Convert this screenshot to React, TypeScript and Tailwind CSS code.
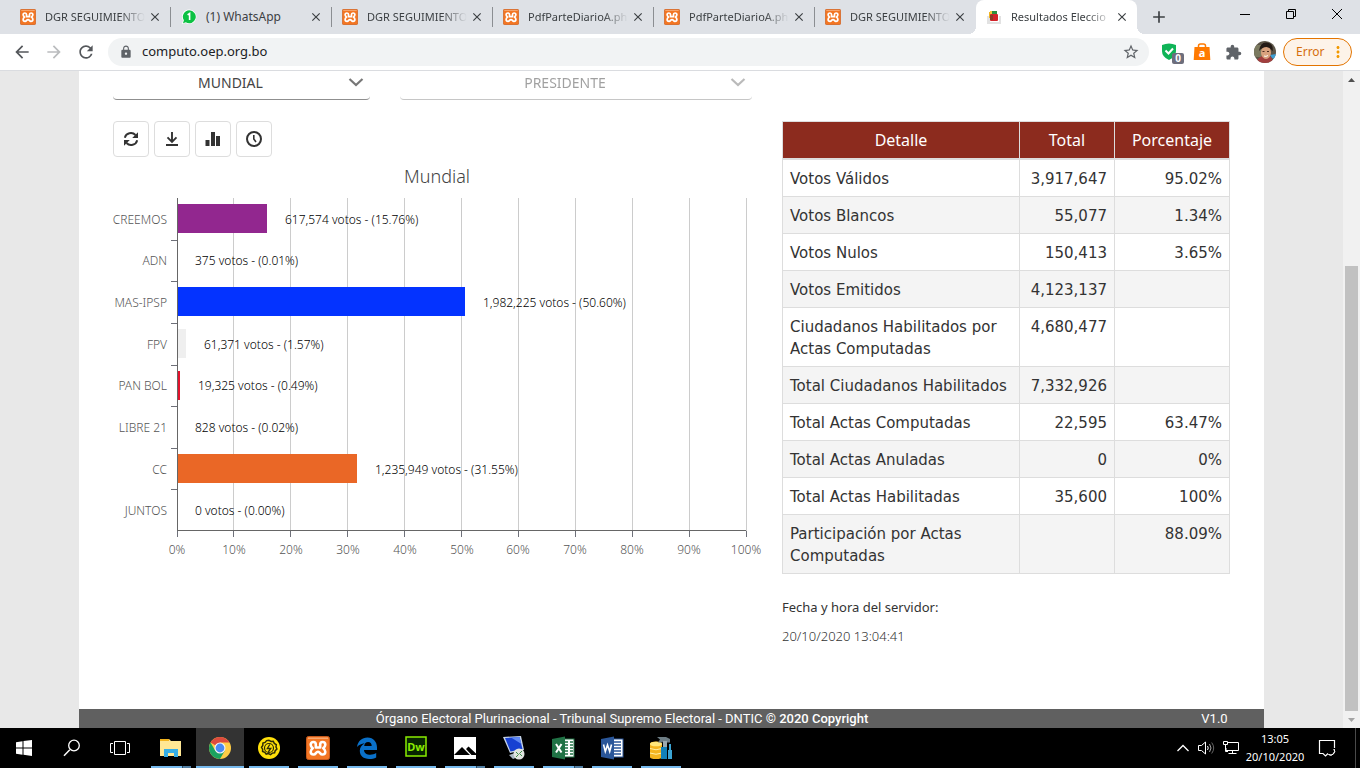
import type { ReactNode } from "react";
import {
  MdArrowBack,
  MdArrowForward,
  MdRefresh,
  MdLock,
  MdStarBorder,
  MdExtension,
  MdMoreVert,
  MdClose,
  MdAdd,
} from "react-icons/md";

const XamppIcon = ({ className }: { className: string }) => (
  <svg viewBox="0 0 24 24" className={className} aria-hidden="true">
    <rect x="0.5" y="0.5" width="23" height="23" rx="2" fill="#f37623" stroke="#c8591a" />
    <path d="M2 2.200h20" stroke="#f9b483" strokeWidth="1.200" />
    <path
      d="M9.800 11.500V8.500C9.800 6.800 8.800 6 7.500 6 5.500 6 4.700 7.300 4.700 8.700 4.700 10.200 5.400 11 6.800 12.200 5.200 13.300 4.700 14.300 4.700 15.700 4.700 17.500 6 18.500 7.600 18.500 10 18.500 9.800 15.800 12 15.800 14.200 15.800 14 18.500 16.400 18.500 18 18.500 19.300 17.500 19.300 15.700 19.300 14.300 18.800 13.300 17.200 12.200 18.600 11 19.300 10.200 19.300 8.700 19.300 7.300 18.500 6 16.500 6 15.200 6 14.200 6.800 14.200 8.500V11.500ZM9.800 11.500H14.200"
      fill="none"
      stroke="#fff"
      strokeWidth="2.600"
      strokeLinecap="round"
      strokeLinejoin="round"
    />
  </svg>
);

const WhatsAppIcon = () => (
  <svg viewBox="0 0 16 16" className="size-4 shrink-0" aria-hidden="true">
    <path d="M8.300 0.500a7.200 7.200 0 1 1-3.800 13.400L0.800 15l1.200-3.600A7.200 7.200 0 0 1 8.300 0.500z" fill="#fff" />
    <path d="M8.300 1.300a6.500 6.500 0 1 1-3.500 12L2 14.200l.9-2.900A6.500 6.500 0 0 1 8.300 1.300z" fill="#0cc143" />
    <path d="M6.600 5.900 8.600 4.500V11" fill="none" stroke="#fff" strokeWidth="1.600" />
  </svg>
);

const BallotIcon = () => (
  <svg viewBox="0 0 16 16" className="size-4 shrink-0" aria-hidden="true">
    <path d="M1 7h3v6h9V7h2v8H1z" fill="#e2e2e2" />
    <rect x="3" y="3" width="5" height="6" fill="#f0b323" />
    <rect x="5" y="2" width="6" height="4" fill="#2c8f3f" />
    <rect x="4" y="5" width="8" height="7" rx="1" fill="#d2232a" />
    <path d="M4 6h3v5H4z" fill="#8d3b25" />
    <path d="M4 2h2v3H4z" fill="#f5c93c" />
  </svg>
);

const tabs = [
  { title: "DGR SEGUIMIENTO", icon: "xampp" },
  { title: "(1) WhatsApp", icon: "whatsapp" },
  { title: "DGR SEGUIMIENTO", icon: "xampp" },
  { title: "PdfParteDiarioA.ph", icon: "xampp" },
  { title: "PdfParteDiarioA.ph", icon: "xampp" },
  { title: "DGR SEGUIMIENTO", icon: "xampp", last: true },
  { title: "Resultados Eleccio", icon: "ballot", active: true },
];

const tabIcons: Record<string, ReactNode> = {
  xampp: <XamppIcon className="size-4 shrink-0" />,
  whatsapp: <WhatsAppIcon />,
  ballot: <BallotIcon />,
};

function TabStrip() {
  return (
    <div className="flex h-[34px] shrink-0 bg-[#dee1e6] pl-[10px]">
      <div className="flex min-w-0 flex-1">
        {tabs.map((tab, i) => (
          <div
            key={i}
            className={
              tab.active
                ? "relative flex min-w-0 max-w-[161px] flex-1 items-center rounded-t-lg bg-white pl-[10px] pr-2 before:absolute before:-left-2 before:bottom-0 before:size-2 before:bg-[radial-gradient(circle_at_0_0,transparent_8px,#fff_8px)] after:absolute after:-right-2 after:bottom-0 after:size-2 after:bg-[radial-gradient(circle_at_100%_0,transparent_8px,#fff_8px)]"
                : "flex min-w-0 max-w-[161px] flex-1 items-center pl-[10px]"
            }
          >
            {tabIcons[tab.icon]}
            <span
              className={
                tab.icon === "whatsapp"
                  ? "ml-[9px] min-w-0 flex-1 whitespace-nowrap text-[12px] text-[#3c4043]"
                  : "ml-[9px] min-w-0 flex-1 overflow-hidden whitespace-nowrap text-[11px] text-[#3c4043] [mask-image:linear-gradient(to_right,#000_75%,transparent)]"
              }
            >
              {tab.title}
            </span>
            <button type="button" aria-label="Cerrar pestaña" className="ml-[3px] shrink-0 text-[#3c4043]">
              <MdClose className="size-[14px]" stroke="currentColor" />
            </button>
            {!tab.active && (
              <span className={tab.last ? "ml-2 h-5 w-px shrink-0" : "ml-2 h-5 w-px shrink-0 bg-[#8b8e92]"} />
            )}
          </div>
        ))}
        <button type="button" aria-label="Nueva pestaña" className="ml-3 text-[#3c4043]">
          <MdAdd className="size-5" />
        </button>
      </div>
      <div className="flex shrink-0 text-black">
        <button type="button" aria-label="Minimizar" className="flex h-7 w-[46px] items-center justify-center">
          <svg viewBox="0 0 12 12" className="size-3"><path d="M1 6.500h10" stroke="currentColor" /></svg>
        </button>
        <button type="button" aria-label="Restaurar" className="flex h-7 w-[46px] items-center justify-center">
          <svg viewBox="0 0 12 12" className="size-3"><path d="M1.500 3.500h7v7h-7zM3.500 3V1.500h7v7H9" fill="none" stroke="currentColor" /></svg>
        </button>
        <button type="button" aria-label="Cerrar" className="flex h-7 w-[46px] items-center justify-center">
          <svg viewBox="0 0 12 12" className="size-3"><path d="m1 1 10 10M11 1 1 11" stroke="currentColor" /></svg>
        </button>
      </div>
    </div>
  );
}

function AddressBar() {
  return (
    <div className="flex h-[37px] shrink-0 items-center border-b border-[#dadce0] bg-white pl-3 pr-2">
      <div className="flex gap-3 text-[#54575b]">
        <button type="button" aria-label="Atrás"><MdArrowBack className="size-5" /></button>
        <button type="button" aria-label="Adelante" className="text-[#babcbe]"><MdArrowForward className="size-5" /></button>
        <button type="button" aria-label="Recargar"><MdRefresh className="size-5" /></button>
      </div>
      <div className="ml-3 flex h-7 flex-1 items-center rounded-full bg-[#f1f3f4] pl-[11px] pr-[9px]">
        <MdLock className="size-[14px] text-[#5f6368]" />
        <input
          aria-label="Dirección"
          defaultValue="computo.oep.org.bo"
          className="ml-[9px] min-w-0 flex-1 bg-transparent text-[13px] text-[#202124] outline-none"
        />
        <button type="button" aria-label="Marcador"><MdStarBorder className="size-[18px] text-[#5f6368]" /></button>
      </div>
      <div className="ml-3 flex items-center">
        <button type="button" aria-label="Protección" className="w-[25px]">
          <svg viewBox="0 0 25 24" className="h-6 w-[25px]">
            <path d="M1 5q7-3 14 0v6q0 6-7 9-7-3-7-9z" fill="#0fb457" />
            <path d="m4.500 10.500 3 3 4.500-5" fill="none" stroke="#fff" strokeWidth="2" />
            <rect x="11" y="13" width="12" height="11" rx="2" fill="#6d6e7c" />
            <text x="17" y="22" textAnchor="middle" fontSize="10" fontWeight="700" fill="#fff">0</text>
          </svg>
        </button>
        <button type="button" aria-label="Compras" className="ml-[7px] w-[18px]">
          <svg viewBox="0 0 18 18" className="size-[18px]">
            <path d="M1.500 4h15l.8 13H.7z" fill="#ff7a00" />
            <path d="M5.500 5.500V3a2 2 0 0 1 2-2h3a2 2 0 0 1 2 2v2.500" fill="none" stroke="#ff7a00" strokeWidth="1.500" />
            <text x="9" y="14" textAnchor="middle" fontSize="11" fontWeight="700" fill="#fff">a</text>
          </svg>
        </button>
        <button type="button" aria-label="Extensiones" className="ml-[14px]"><MdExtension className="size-[17px] text-[#5f6368]" /></button>
        <button type="button" aria-label="Perfil" className="ml-3">
          <svg viewBox="0 0 22 22" className="size-[22px] rounded-full">
            <rect width="22" height="22" fill="#5c5548" />
            <path d="M0 4h8v12H0z" fill="#7b7a60" />
            <path d="M3 19q6-7 14-3l3 6H3z" fill="#a23e3e" />
            <path d="M16 14l6-1v6l-4-2z" fill="#3d9fd6" />
            <ellipse cx="12" cy="11.500" rx="5" ry="6.500" fill="#d9a27e" />
            <path d="M5 10Q6 1 13 1.500q7 1 5.500 9-2-4-6-4.500-4 0-7.500 4z" fill="#241a16" />
            <path d="M8.500 10.500h2M13 10.500h2" stroke="#4b2b20" />
            <path d="M10 15q2 1 4-.5" fill="none" stroke="#fff" />
          </svg>
        </button>
        <button type="button" className="ml-[7px] flex h-7 w-[69px] items-center justify-between rounded-full border border-[#e37400] bg-[#fdf3e9] pl-3 pr-1 text-[12px] text-[#d56e0c]">
          Error
          <MdMoreVert className="size-[18px] text-[#f29900]" />
        </button>
      </div>
    </div>
  );
}

const results = [
  { party: "CREEMOS", votes: "617,574", pct: 15.76, color: "#92278f" },
  { party: "ADN", votes: "375", pct: 0.01, color: "#777777" },
  { party: "MAS-IPSP", votes: "1,982,225", pct: 50.6, color: "#0433ff" },
  { party: "FPV", votes: "61,371", pct: 1.57, color: "#efefef" },
  { party: "PAN BOL", votes: "19,325", pct: 0.49, color: "#e3122c" },
  { party: "LIBRE 21", votes: "828", pct: 0.02, color: "#777777" },
  { party: "CC", votes: "1,235,949", pct: 31.55, color: "#ea6726" },
  { party: "JUNTOS", votes: "0", pct: 0, color: "#777777" },
];

const PLOT_X = 64;
const PLOT_Y = 41;
const PLOT_W = 569;
const PLOT_H = 333;
const ROW_H = PLOT_H / results.length;

function ResultsChart() {
  const steps = Array.from({ length: 11 }, (_, i) => i);
  return (
    <svg viewBox="0 0 639 410" className="block w-full overflow-visible text-[12px] font-light" role="img" aria-label="Resultados Mundial">
      <text x="324" y="26" textAnchor="middle" fontSize="18" fill="#444">Mundial</text>
      <g shapeRendering="crispEdges">
        {steps.map((i) => {
          const x = PLOT_X + 0.5 + Math.floor((PLOT_W / 10) * i);
          return (
            <g key={i}>
              <line x1={x} x2={x} y1={PLOT_Y} y2={PLOT_Y + PLOT_H} stroke="#ccc" />
              <line x1={x} x2={x} y1={PLOT_Y + PLOT_H} y2={PLOT_Y + PLOT_H + 6} stroke="#6e7079" />
            </g>
          );
        })}
        {results.map((r, i) => (
          <g key={r.party}>
            <rect x={PLOT_X} y={Math.round(PLOT_Y + ROW_H * i + 6)} width={(PLOT_W * r.pct) / 100} height="29" fill={r.color} />
            {i > 0 && (
              <line x1={PLOT_X - 6} x2={PLOT_X} y1={Math.round(PLOT_Y + ROW_H * i) + 0.5} y2={Math.round(PLOT_Y + ROW_H * i) + 0.5} stroke="#6e7079" />
            )}
          </g>
        ))}
        <path d={`M${PLOT_X + 0.5} ${PLOT_Y}V${PLOT_Y + PLOT_H - 0.5}H${PLOT_X + PLOT_W}`} fill="none" stroke="#666" />
      </g>
      {results.map((r, i) => (
        <g key={r.party}>
          <text x={PLOT_X - 10} y={Math.round(PLOT_Y + ROW_H * (i + 0.5)) + 5} textAnchor="end" fill="#555">{r.party}</text>
          <text x={Math.round(PLOT_X + (PLOT_W * r.pct) / 100) + 18} y={Math.round(PLOT_Y + ROW_H * (i + 0.5)) + 5} fill="#000">
            {`${r.votes} votos - (${r.pct.toFixed(2)}%)`}
          </text>
        </g>
      ))}
      {steps.map((i) => (
        <text key={i} x={PLOT_X + Math.round((PLOT_W / 10) * i)} y="397" textAnchor="middle" fill="#555">{i * 10}%</text>
      ))}
    </svg>
  );
}

const details = [
  ["Votos Válidos", "3,917,647", "95.02%"],
  ["Votos Blancos", "55,077", "1.34%"],
  ["Votos Nulos", "150,413", "3.65%"],
  ["Votos Emitidos", "4,123,137", ""],
  ["Ciudadanos Habilitados por Actas Computadas", "4,680,477", ""],
  ["Total Ciudadanos Habilitados", "7,332,926", ""],
  ["Total Actas Computadas", "22,595", "63.47%"],
  ["Total Actas Anuladas", "0", "0%"],
  ["Total Actas Habilitadas", "35,600", "100%"],
  ["Participación por Actas Computadas", "", "88.09%"],
];

function DetailTable() {
  return (
    <table className="w-full table-fixed border-collapse font-['DejaVu_Sans',sans-serif] text-[15px] leading-[22px] text-[#333]">
      <colgroup>
        <col />
        <col className="w-[95px]" />
        <col className="w-[115px]" />
      </colgroup>
      <thead>
        <tr className="bg-[#8c2b1e] text-white">
          {["Detalle", "Total", "Porcentaje"].map((h) => (
            <th key={h} className="border border-b-2 border-[#ddd] px-[7px] py-[7px] font-['Noto_Sans',sans-serif] text-[16px] font-normal">{h}</th>
          ))}
        </tr>
      </thead>
      <tbody>
        {details.map(([name, total, pct]) => (
          <tr key={name} className="align-top even:bg-[#f4f4f4]">
            <td className="border border-[#ddd] px-[7px] pb-[6px] pt-2">{name}</td>
            <td className="border border-[#ddd] px-[7px] pb-[6px] pt-2 text-right">{total}</td>
            <td className="border border-[#ddd] px-[7px] pb-[6px] pt-2 text-right">{pct}</td>
          </tr>
        ))}
      </tbody>
    </table>
  );
}

function Picker({ label, value, disabled }: { label: string; value: string; disabled?: boolean }) {
  return (
    <div className={disabled ? "relative min-w-0 flex-1 opacity-50" : "relative w-[257px] shrink-0"}>
      <select
        aria-label={label}
        disabled={disabled}
        className="block h-[29px] w-full appearance-none rounded-sm border-b border-[#8f8f8f] bg-transparent pb-[5px] pr-[22px] text-center text-[14px] text-[#444] [text-align-last:center]"
      >
        <option>{value}</option>
      </select>
      <svg viewBox="0 0 16 10" className="pointer-events-none absolute right-[6px] top-[6px] h-[10px] w-4">
        <path d="m1.500 2 6.500 6L14.500 2" fill="none" stroke="#777" strokeWidth="2.200" />
      </svg>
    </div>
  );
}

const toolButtons: { label: string; drawing: ReactNode }[] = [
  {
    label: "Actualizar",
    drawing: (
      <>
        <path d="M2.800 7.800A6.300 6.300 0 0 1 13.500 5M15.200 10.200A6.300 6.300 0 0 1 4.500 13" fill="none" stroke="#333" strokeWidth="1.900" />
        <path d="M16 2.200V8h-5.800zM2 15.800V10h5.800z" fill="#333" />
      </>
    ),
  },
  {
    label: "Descargar",
    drawing: (
      <path d="M9 2v9.500M4.500 7.300 9 11.800l4.500-4.500M3 15h12" fill="none" stroke="#333" strokeWidth="1.900" />
    ),
  },
  { label: "Gráfico", drawing: <path d="M1.500 10h4v6h-4zM7 2h4v14H7zM12 6h4v10h-4z" fill="#333" /> },
  {
    label: "Historial",
    drawing: (
      <>
        <circle cx="9" cy="9" r="7" fill="none" stroke="#333" strokeWidth="2" />
        <path d="M8.800 5v4l2.200 3" fill="none" stroke="#333" strokeWidth="1.600" />
      </>
    ),
  },
];

function WebPage() {
  return (
    <div className="flex min-h-0 flex-1 bg-[#e8e8e8]">
      <div className="mx-auto flex w-full min-w-0 max-w-[1185px] flex-col overflow-hidden bg-white">
        <main className="flex min-h-0 flex-1 gap-[30px] px-[34px]">
          <section className="min-w-0 flex-1">
            <div className="flex gap-[30px]">
              <Picker label="Ámbito" value="MUNDIAL" />
              <Picker label="Cargo" value="PRESIDENTE" disabled />
            </div>
            <div className="mt-[21px] flex gap-[5px]">
              {toolButtons.map((b) => (
                <button key={b.label} type="button" aria-label={b.label} className="flex size-9 items-center justify-center rounded border border-[#ddd]">
                  <svg viewBox="0 0 18 18" className="size-[18px]">{b.drawing}</svg>
                </button>
              ))}
            </div>
            <ResultsChart />
          </section>
          <aside className="w-[448px] shrink-0 pt-[50px]">
            <DetailTable />
            <p className="mt-[23px] text-[13px] leading-5 text-[#333]">Fecha y hora del servidor:</p>
            <p className="mt-[9px] text-[13px] font-light leading-5 text-[#333]">20/10/2020 13:04:41</p>
          </aside>
        </main>
        <footer className="flex h-[19px] shrink-0 items-center bg-[#606060] text-center font-[Roboto,sans-serif] text-[13px] text-white">
          <p className="flex-1">
            Órgano Electoral Plurinacional - Tribunal Supremo Electoral - DNTIC <span className="font-medium">© 2020 Copyright</span>
          </p>
          <p className="w-[99px]">V1.0</p>
        </footer>
      </div>
      <div className="flex w-[17px] shrink-0 flex-col items-center bg-[#f1f1f1]">
        <svg viewBox="0 0 17 17" className="size-[17px] shrink-0"><path d="M5 11h7L8.500 7z" fill="#505050" /></svg>
        <div className="w-[13px] flex-1 pt-[178px]">
          <div className="h-full bg-[#c1c1c1]" />
        </div>
        <svg viewBox="0 0 17 17" className="size-[17px] shrink-0"><path d="M5 7h7l-3.500 4z" fill="#a3a3a3" /></svg>
      </div>
    </div>
  );
}

const apps: { name: string; multi?: boolean; active?: boolean; drawing: ReactNode }[] = [
  {
    name: "Explorador",
    multi: true,
    drawing: (
      <>
        <path d="M1 3h9l2 2h10v15H1z" fill="#ffe794" />
        <path d="M1 3h9v2H1z" fill="#f2b41f" />
        <path d="M5 21v-8h14v8h-4v-4H9v4z" fill="#36aee6" />
      </>
    ),
  },
  {
    name: "Chrome",
    active: true,
    drawing: (
      <>
        <circle cx="12" cy="12" r="11" fill="#ffcd46" />
        <path d="M12 12 2.500 6.500A11 11 0 0 1 21.500 6.500H12z" fill="#dd4b3e" />
        <path d="M2.500 6.500A11 11 0 0 0 12 23l4.800-8.300L12 12 7.300 14.700z" fill="#1aa260" />
        <circle cx="12" cy="12" r="5.500" fill="#f5f5f5" />
        <circle cx="12" cy="12" r="4.400" fill="#4a8af4" />
      </>
    ),
  },
  {
    name: "Monitor",
    drawing: (
      <>
        <circle cx="12" cy="12" r="11" fill="#ffe00a" />
        <path
          d="M12 4.300l2 1.200 2.300-.2 1 2.100 2 1.200-.3 2.300.9 2.100-1.700 1.600-.6 2.200-2.300.3-1.800 1.500-2-1-2.300.5-1.400-1.800-2.200-.8v-2.300L4.500 11.300l1.300-1.900.1-2.300 2.200-.7 1.500-1.800z"
          fill="none"
          stroke="#2e2c07"
          strokeWidth="1.500"
        />
        <circle cx="12" cy="12" r="4.500" fill="none" stroke="#2e2c07" strokeWidth="1.200" />
        <path d="m12.800 8.500-2.500 4h3.500l-2.500 3.500" fill="none" stroke="#2e2c07" strokeWidth="1.300" />
      </>
    ),
  },
  { name: "XAMPP", drawing: <XamppIcon className="size-6" /> },
  {
    name: "Edge",
    drawing: (
      <path
        d="M2 11C3 5 7 1.500 12.500 1.500 18.500 1.500 22 6 22 11.500V14H9c.2 3.500 3.200 4.800 6.200 4.800 2.300 0 4.200-.7 6-1.700v4.300c-2 1.100-4.300 1.600-7 1.600-5.700 0-9.400-3.200-9.400-8.200 0-3.300 1.800-6 4.900-7.600C6.500 7.600 4 8.700 2 11zm7.200-1h7.500c0-2.600-1.400-4-3.600-4S9.500 7.600 9.200 10z"
        fill="#0a70c8"
      />
    ),
  },
  {
    name: "Dreamweaver",
    drawing: (
      <>
        <rect x="2" y="1" width="20" height="19" fill="#072401" stroke="#8aec00" strokeWidth="1.500" />
        <text x="12" y="14.500" textAnchor="middle" fontSize="11" fontWeight="700" fill="#8aec00">Dw</text>
      </>
    ),
  },
  {
    name: "Fotos",
    multi: true,
    drawing: (
      <>
        <rect x="1" y="1" width="22" height="22" fill="#fff" />
        <path d="M1 19 9 11l8 8zM13 13l2.500-2.500L23 17.500V19h-4.500z" fill="#000" />
      </>
    ),
  },
  {
    name: "Escritorio remoto",
    drawing: (
      <>
        <path d="m1 1 18-1 3 14-14 3z" fill="#c7d5ea" />
        <path d="m3 2 14.500-1 3 12-12 2.500z" fill="#1741d2" />
        <path d="m9 1.600 8.500-.6 2 7z" fill="#5f88f2" />
        <path d="m7 19 9-3 2 4-7 3z" fill="#aab7c6" />
        <circle cx="17" cy="18" r="5.500" fill="#e1e4e1" />
        <path d="m14 16 2.500 2.500L14 21M20 15l-2.500 2.500L20 20" fill="none" stroke="#40904a" />
      </>
    ),
  },
  {
    name: "Excel",
    multi: true,
    drawing: (
      <>
        <rect x="12" y="3" width="11" height="18" fill="#fff" stroke="#207245" />
        <path d="M14 6h3M19 6h3M14 9h3M19 9h3M14 12h3M19 12h3M14 15h3M19 15h3M14 18h3M19 18h3" stroke="#207245" strokeWidth="1.600" />
        <path d="m1 3 13-2.500v23L1 21z" fill="#207245" />
        <path d="m5 8 5.500 8.500M10.500 8 5 16.500" stroke="#fff" strokeWidth="2" />
      </>
    ),
  },
  {
    name: "Word",
    drawing: (
      <>
        <rect x="12" y="3" width="11" height="18" fill="#fff" stroke="#2a5699" />
        <path d="M14 6h7M14 9h7M14 12h7M14 15h7M14 18h7" stroke="#2a5699" strokeWidth="1.300" />
        <path d="m1 3 13-2.500v23L1 21z" fill="#2a5699" />
        <path d="m3.500 8.500 1.800 7L7.500 9l2.200 6.500 1.800-7" fill="none" stroke="#fff" strokeWidth="1.600" />
      </>
    ),
  },
  {
    name: "Base de datos",
    drawing: (
      <>
        <path d="M1 8q0-2.500 6-2.500T13 8v13q0 2-6 2t-6-2z" fill="#f4b51f" />
        <ellipse cx="7" cy="8" rx="6" ry="2.300" fill="#ffe77b" />
        <path d="M1 12.500q6 2.500 12 0M1 17q6 2.500 12 0" fill="none" stroke="#fff0a5" />
        <path d="M8 1h9l4 2v3.500h-3l-1-1h-3l-1 1h-4l2-3z" fill="#6d7d85" />
        <path d="M14 5h4v7h-4z" fill="#9aa9b0" />
        <path d="M12 11h6v12h-6z" fill="#1180b8" />
        <path d="M20 8h2v6h1v9h-4v-9h1z" fill="#3ba4d4" />
      </>
    ),
  },
];

function Taskbar() {
  return (
    <nav aria-label="Barra de tareas" className="flex h-10 shrink-0 bg-black text-white">
      <button type="button" aria-label="Inicio" className="flex w-12 items-center justify-center">
        <svg viewBox="0 0 16 16" className="size-4"><path d="M0 2.200 6.500 1.300V7.500H0zM7.500 1.100 16 0v7.500H7.500zM0 8.500h6.500v6.200L0 13.800zM7.500 8.500H16V16l-8.500-1.200z" fill="#fff" /></svg>
      </button>
      <button type="button" aria-label="Buscar" className="flex w-12 items-center justify-center">
        <svg viewBox="0 0 18 18" className="size-[18px]"><path d="M6.800 10.800 1 16.800" stroke="#fff" strokeWidth="1.500" /><circle cx="11" cy="6.500" r="5.300" fill="none" stroke="#fff" strokeWidth="1.300" /></svg>
      </button>
      <button type="button" aria-label="Vista de tareas" className="flex w-12 items-center justify-center">
        <svg viewBox="0 0 20 16" className="h-4 w-5"><path d="M4.500 1.500h11v13h-11zM3 3.500H.5v9H3M17 3.500h2.500v9H17" fill="none" stroke="#fff" /></svg>
      </button>
      <div className="ml-[3px] flex flex-1 gap-px">
        {apps.map((app) => (
          <button
            key={app.name}
            type="button"
            aria-label={app.name}
            className={app.active ? "flex w-12 flex-col items-center bg-[#333]" : "flex w-12 flex-col items-center px-1"}
          >
            <span className="flex w-full flex-1 items-center justify-center pt-[2px]">
              <svg viewBox="0 0 24 24" className="size-6">{app.drawing}</svg>
            </span>
            <span className="flex h-[2px] w-full">
              <span className="flex-1 bg-[#76b9ed]" />
              {app.multi && <span className="w-[9px] border-l border-[#2d4a60] bg-[#527fa3]" />}
            </span>
          </button>
        ))}
      </div>
      <div className="flex items-center">
        <button type="button" aria-label="Mostrar iconos ocultos" className="w-6">
          <svg viewBox="0 0 24 16" className="h-4 w-6"><path d="m6.500 11 5.500-5.500 5.500 5.500" fill="none" stroke="#fff" strokeWidth="1.300" /></svg>
        </button>
        <button type="button" aria-label="Volumen" className="w-6">
          <svg viewBox="0 0 24 16" className="h-4 w-6">
            <path d="M3.500 5.500h3l4-3.500v12l-4-3.500h-3zM12.500 6q1.500 2 0 4" fill="none" stroke="#fff" />
            <path d="M14.500 4q3 4 0 8" fill="none" stroke="#aaa" />
            <path d="M16.700 2.500q4 5.500 0 11" fill="none" stroke="#666" />
          </svg>
        </button>
        <button type="button" aria-label="Red" className="w-6">
          <svg viewBox="0 0 24 16" className="h-4 w-6"><path d="M8 2.500h11.500v8H7V8M13.500 10.500v3M9.500 13.500h8M4.500 1.500h4v3h-4zM6.500 5v6.500H9" fill="none" stroke="#fff" /></svg>
        </button>
        <div className="w-16 text-center text-[11px] leading-[18px]">
          <div>13:05</div>
          <div>20/10/2020</div>
        </div>
        <button type="button" aria-label="Notificaciones" className="ml-[9px] w-[22px]">
          <svg viewBox="0 0 22 18" className="h-[18px] w-[22px]">
            <path d="M12 14.500 9.500 17 7 14.500H3.500v-13h15V9" fill="none" stroke="#fff" strokeWidth="1.200" />
            <path d="M12.500 15.500a4 4 0 0 0 5.500-5.500 4 4 0 0 1-5.500 5.500z" fill="#fff" stroke="#fff" />
          </svg>
        </button>
        <span className="ml-[17px] mr-1 h-10 w-px bg-[#4a4a4a]" />
      </div>
    </nav>
  );
}

export default function App() {
  return (
    <div className="flex h-screen flex-col overflow-hidden font-['Noto_Sans','Open_Sans',sans-serif]">
      <TabStrip />
      <AddressBar />
      <WebPage />
      <Taskbar />
    </div>
  );
}
